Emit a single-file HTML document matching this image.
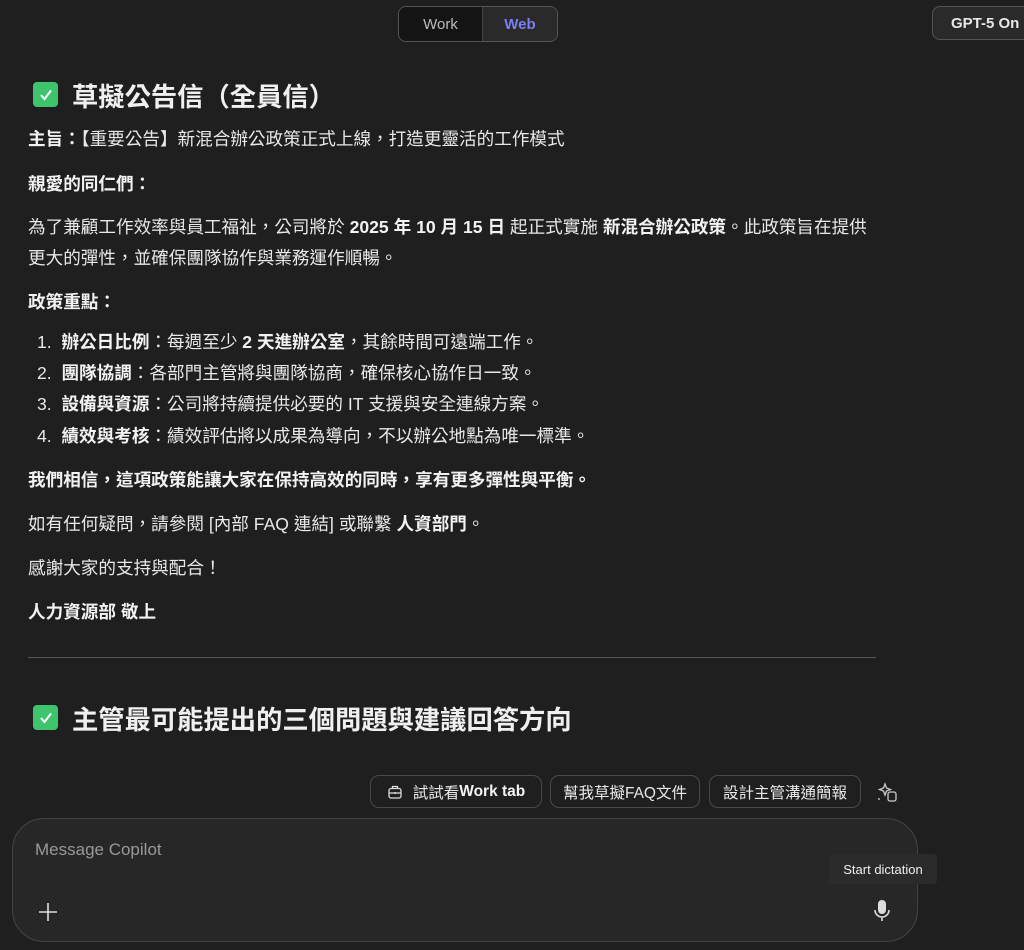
<!DOCTYPE html>
<html><head><meta charset="utf-8"><style>
body{margin:0;width:1024px;height:950px;background:#1f1f1f;color:#e8e8e8;font-family:"Liberation Sans","Noto Sans CJK TC",sans-serif;position:relative;overflow:hidden}
.abs{position:absolute}
.t{position:absolute;left:28px;font-size:17.6px;line-height:22px;white-space:nowrap}
b{font-weight:700;color:#f2f2f2}
.h{position:absolute;left:33px;font-size:26.3px;font-weight:700;display:flex;align-items:center;gap:14px;color:#f0f0f0}
.ck{width:25px;height:25px;background:#3ec46d;border-radius:4px;display:flex;align-items:center;justify-content:center}
.chip{position:absolute;top:775px;height:33px;border:1px solid #4a4a4a;border-radius:9px;font-size:15.5px;display:flex;align-items:center;justify-content:center;color:#e8e8e8;box-sizing:border-box}
</style></head><body>
<div class="abs" style="left:398px;top:6px;width:158px;height:34px;border:1px solid #555;border-radius:8px;overflow:hidden;display:flex;font-size:15px">
<div style="width:83px;background:#141414;color:#bbb;display:flex;align-items:center;justify-content:center">Work</div>
<div style="flex:1;background:#2a2a2a;color:#7b7ff5;font-weight:700;display:flex;align-items:center;justify-content:center;border-left:1px solid #444">Web</div></div>
<div class="abs" style="left:932px;top:6px;width:110px;height:34px;border:1px solid #555;border-radius:8px;background:#2a2a2a;font-size:15px;font-weight:700;display:flex;align-items:center;padding-left:18px;box-sizing:border-box">GPT-5 On</div>

<div class="h" style="top:75px"><div class="ck"><svg width="16" height="16" viewBox="0 0 16 16"><path d="M3 8l3.5 4L13 3.5" stroke="#fff" stroke-width="2" fill="none"/></svg></div>草擬公告信（全員信）</div>
<div class="t" style="top:128px"><b>主旨：</b>【重要公告】新混合辦公政策正式上線，打造更靈活的工作模式</div>
<div class="t" style="top:173px"><b>親愛的同仁們：</b></div>
<div class="t" style="top:216px">為了兼顧工作效率與員工福祉，公司將於 <b>2025 年 10 月 15 日</b> 起正式實施 <b>新混合辦公政策</b>。此政策旨在提供</div>
<div class="t" style="top:247px">更大的彈性，並確保團隊協作與業務運作順暢。</div>
<div class="t" style="top:291px"><b>政策重點：</b></div>
<div class="t" style="top:331px;left:37px">1.&nbsp; <b>辦公日比例</b>：每週至少 <b>2 天進辦公室</b>，其餘時間可遠端工作。</div>
<div class="t" style="top:362px;left:37px">2.&nbsp; <b>團隊協調</b>：各部門主管將與團隊協商，確保核心協作日一致。</div>
<div class="t" style="top:393px;left:37px">3.&nbsp; <b>設備與資源</b>：公司將持續提供必要的 IT 支援與安全連線方案。</div>
<div class="t" style="top:425px;left:37px">4.&nbsp; <b>績效與考核</b>：績效評估將以成果為導向，不以辦公地點為唯一標準。</div>
<div class="t" style="top:469px"><b>我們相信，這項政策能讓大家在保持高效的同時，享有更多彈性與平衡。</b></div>
<div class="t" style="top:513px">如有任何疑問，請參閱 [內部 FAQ 連結] 或聯繫 <b>人資部門</b>。</div>
<div class="t" style="top:557px">感謝大家的支持與配合！</div>
<div class="t" style="top:601px"><b>人力資源部 敬上</b></div>
<div class="abs" style="left:28px;top:657px;width:848px;height:1px;background:#555"></div>
<div class="h" style="top:698px"><div class="ck"><svg width="16" height="16" viewBox="0 0 16 16"><path d="M3 8l3.5 4L13 3.5" stroke="#fff" stroke-width="2" fill="none"/></svg></div>主管最可能提出的三個問題與建議回答方向</div>

<div class="chip" style="left:370px;width:172px"><svg width="16" height="16" viewBox="0 0 16 16" style="margin-right:10px"><rect x="2" y="4.5" width="12" height="9.5" rx="2" stroke="#ddd" fill="none" stroke-width="1.3"/><path d="M5.5 4.5V2.5h5v2M2 9h12M8 8v2" stroke="#ddd" fill="none" stroke-width="1.3"/></svg>試試看<b>Work tab</b></div>
<div class="chip" style="left:550px;width:150px">幫我草擬FAQ文件</div>
<div class="chip" style="left:709px;width:152px">設計主管溝通簡報</div>
<svg class="abs" style="left:876px;top:781px" width="22" height="22" viewBox="0 0 22 22"><path d="M9 3l1.5 4 4 1.5-4 1.5L9 14l-1.5-4-4-1.5 4-1.5z" stroke="#ccc" fill="none" stroke-width="1.3"/><rect x="12" y="11" width="8" height="9" rx="2" stroke="#ccc" fill="none" stroke-width="1.3"/><path d="M3 17v2" stroke="#ccc" stroke-width="1.3"/></svg>

<div class="abs" style="left:12px;top:818px;width:906px;height:124px;border:1px solid #444;border-radius:32px;background:#272727;box-sizing:border-box"></div>
<div class="abs" style="left:35px;top:840px;font-size:17px;color:#999">Message Copilot</div>
<svg class="abs" style="left:37px;top:901px" width="22" height="22" viewBox="0 0 22 22"><path d="M11 2v18M2 11h18" stroke="#ddd" stroke-width="1.6"/></svg>
<svg class="abs" style="left:872px;top:898px" width="20" height="26" viewBox="0 0 20 26"><rect x="6" y="2" width="8" height="14" rx="4" fill="#ddd"/><path d="M3 12a7 7 0 0 0 14 0M10 19v4" stroke="#ddd" stroke-width="1.6" fill="none"/></svg>
<div class="abs" style="left:829px;top:854px;width:108px;height:30px;background:#2b2b2b;border-radius:4px;font-size:13px;display:flex;align-items:center;justify-content:center;color:#eee">Start dictation</div>
</body></html>
